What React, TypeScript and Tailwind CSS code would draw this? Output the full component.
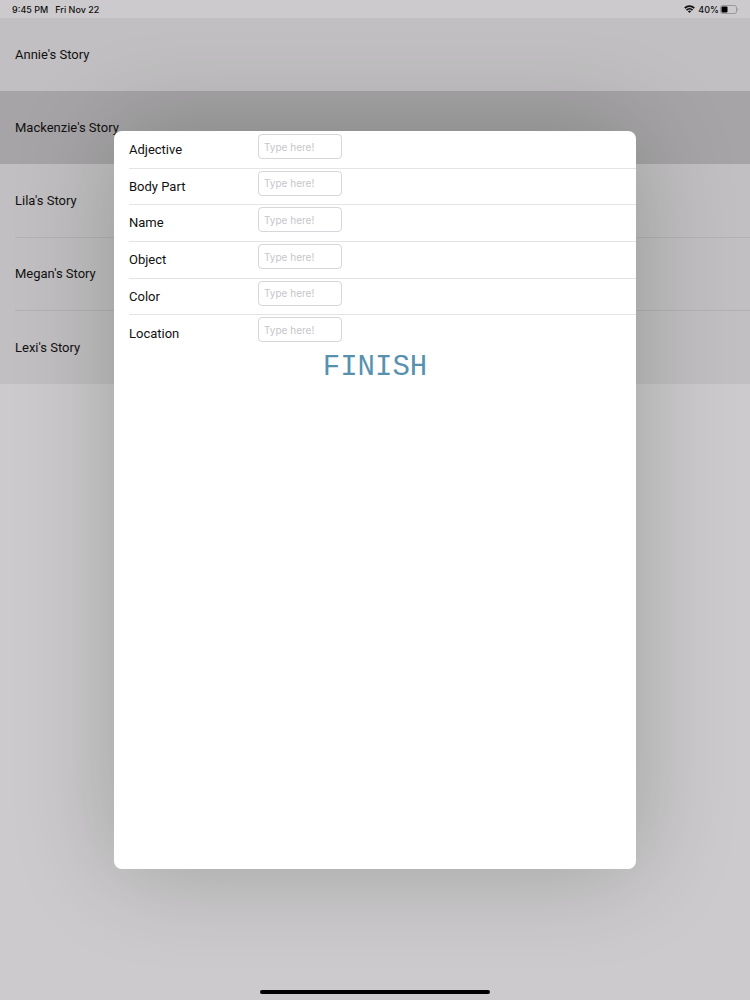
const stories = ["Annie's Story", "Mackenzie's Story", "Lila's Story", "Megan's Story", "Lexi's Story"];
const fields = ['Adjective', 'Body Part', 'Name', 'Object', 'Color', 'Location'];

function StatusBar() {
  return (
    <header className="flex h-[18px] items-center justify-between pr-[11px] pl-3 font-[Inter,sans-serif] text-[9px] leading-none font-medium">
      <div className="flex gap-[7px]">
        <span>9:45 PM</span>
        <span>Fri Nov 22</span>
      </div>
      <div className="flex items-center gap-px">
        <svg className="mr-[2px] h-2 w-[11px]" viewBox="0 0 22 16" fill="none" stroke="currentColor" strokeWidth="3.6" aria-hidden="true">
          <path d="M1.5 6.2a13.4 13.4 0 0 1 19 0" />
          <path d="M5 10.2a8.5 8.5 0 0 1 12 0" />
          <path d="M11 16l-3.2-3.3a4.6 4.6 0 0 1 6.4 0z" fill="currentColor" stroke="none" />
        </svg>
        <span>40%</span>
        <svg className="h-[9px] w-[19px]" viewBox="0 0 19 9" aria-hidden="true">
          <rect x="0.5" y="0.5" width="16" height="8" rx="2" fill="none" stroke="#8d8b8d" strokeWidth="0.8" />
          <rect x="1.5" y="1.5" width="6" height="6" rx="1" fill="#000" />
          <path d="M17.5 3.2c1 .4 1 2.2 0 2.6z" fill="#8d8b8d" />
        </svg>
      </div>
    </header>
  );
}

function StoryList() {
  return (
    <ul className="grid h-[366px] grid-rows-5 bg-[#c1bfc1]">
      {stories.map((story, i) => (
        <li key={story} className={i === 1 ? 'bg-[#a6a4a6]' : 'pl-[15px]'}>
          <button
            type="button"
            className={
              i === 1
                ? 'h-full w-full pl-[15px] text-left'
                : i === 2 || i === 3
                  ? 'h-full w-full border-b border-[#b3b1b3] text-left'
                  : 'h-full w-full text-left'
            }
          >
            {story}
          </button>
        </li>
      ))}
    </ul>
  );
}

function StoryForm() {
  return (
    <form
      role="dialog"
      aria-label="Story words"
      className="min-h-[738px] w-full overflow-hidden rounded-lg bg-white pt-px"
    >
      <div className="grid h-[220px] grid-rows-6">
        {fields.map((field, i) => (
          <div
            key={field}
            className={
              i < fields.length - 1
                ? 'ml-[15px] flex items-start border-b border-[#e4e4e6]'
                : 'ml-[15px] flex items-start'
            }
          >
            <label htmlFor={field} className="w-[129px] self-center">
              {field}
            </label>
            <input
              id={field}
              type="text"
              placeholder="Type here!"
              className="mt-[2px] h-[25px] w-[84px] rounded border border-[#d6d6db] bg-white px-[5px] font-[Inter,sans-serif] text-[10px] placeholder:text-[#c6c6ca]"
            />
          </div>
        ))}
      </div>
      <div className="flex justify-center">
        <button type="submit" className="font-['Liberation_Mono',monospace] text-[29px] leading-8 text-[#5791af]">
          FINISH
        </button>
      </div>
    </form>
  );
}

export default function App() {
  return (
    <div className="relative flex min-h-screen flex-col bg-[#cccacc] font-[Roboto,sans-serif] text-[13px] text-[#111]">
      <StatusBar />
      <StoryList />
      <div className="mt-auto flex justify-center pb-[6px]">
        <div className="h-1 w-[230px] rounded-full bg-black" />
      </div>
      <div className="absolute inset-0 flex items-center justify-center">
        <div className="flex w-full max-w-[522px] rounded-lg shadow-[0_0_100px_0_rgba(0,20,10,0.22)]">
          <StoryForm />
        </div>
      </div>
    </div>
  );
}
